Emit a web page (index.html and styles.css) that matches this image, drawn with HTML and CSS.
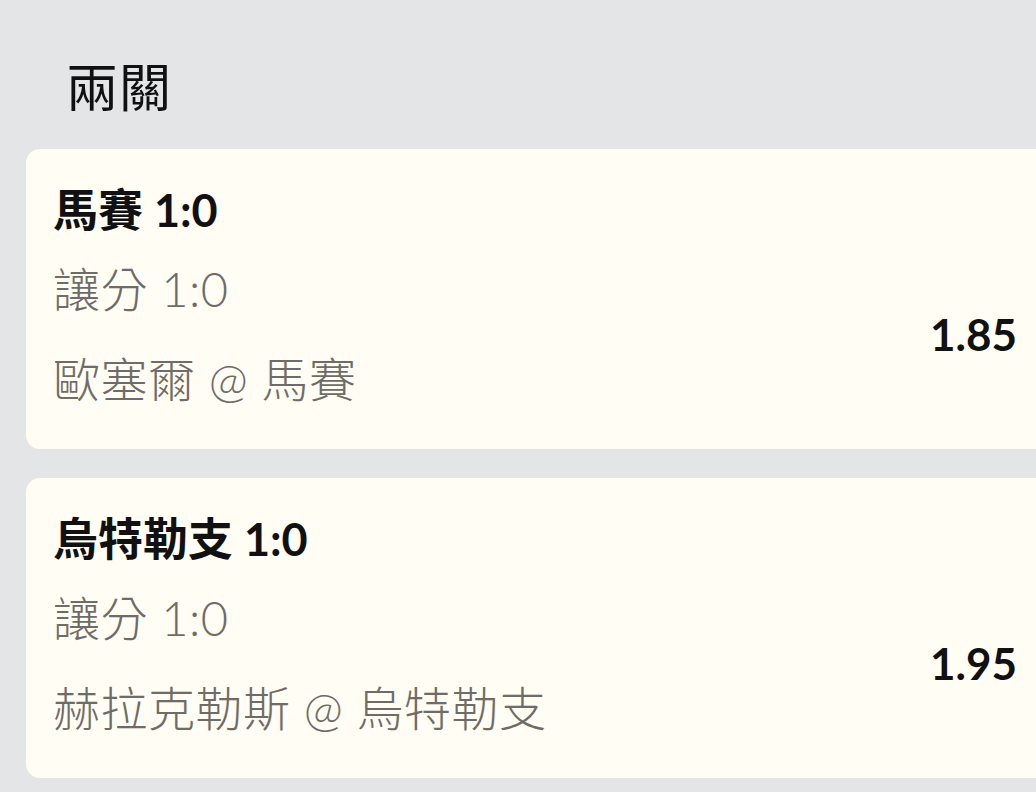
FILE: index.html
```html
<!DOCTYPE html>
<html lang="zh-Hant">
<head>
<meta charset="utf-8">
<link rel="stylesheet" href="styles.css">
</head>
<body>
<div class="page">
  <h1 class="heading">兩關</h1>
  <div class="card">
    <div class="card-title">馬賽 1:0</div>
    <div class="card-body">
      <div class="info">
        <div class="market">讓分 1:0</div>
        <div class="teams">歐塞爾 @ 馬賽</div>
      </div>
      <div class="odds">1.85</div>
    </div>
  </div>
  <div class="card">
    <div class="card-title">烏特勒支 1:0</div>
    <div class="card-body">
      <div class="info">
        <div class="market">讓分 1:0</div>
        <div class="teams">赫拉克勒斯 @ 烏特勒支</div>
      </div>
      <div class="odds">1.95</div>
    </div>
  </div>
</div>
</body>
</html>
```
FILE: styles.css
```css
html, body {
  margin: 0;
  padding: 0;
  background: #e4e5e7;
  overflow: hidden;
}
body {
  width: 1036px;
  height: 792px;
  font-family: Lato, "Noto Sans CJK TC", sans-serif;
}
.page {
  padding: 0 0 0 26px;
  display: flex;
  flex-direction: column;
  gap: 29px;
}
.heading {
  margin: 0 0 4px 0;
  padding: 54px 0 0 40px;
  font-family: "Noto Sans CJK TC", sans-serif;
  font-weight: 400;
  font-size: 52px;
  line-height: 62px;
  height: 62px;
  letter-spacing: 1px;
  color: #111;
}
.card {
  background: #fffdf4;
  border-radius: 14px;
  margin-right: -30px;
  padding: 31px 49px 40px 27px;
}
.card-title {
  font-size: 45px;
  line-height: 60px;
  font-weight: 700;
  color: #111;
}
.card-body {
  display: flex;
  align-items: center;
  justify-content: space-between;
  margin-top: 19px;
}
.info {
  display: flex;
  flex-direction: column;
  gap: 30px;
}
.market, .teams {
  font-family: Lato, "Noto Sans CJK TC", sans-serif;
  font-weight: 300;
  font-size: 47px;
  line-height: 60px;
  letter-spacing: 0.5px;
  color: #6f6c67;
}
.odds {
  font-size: 44px;
  font-weight: 700;
  color: #111;
  line-height: 60px;
}
```
